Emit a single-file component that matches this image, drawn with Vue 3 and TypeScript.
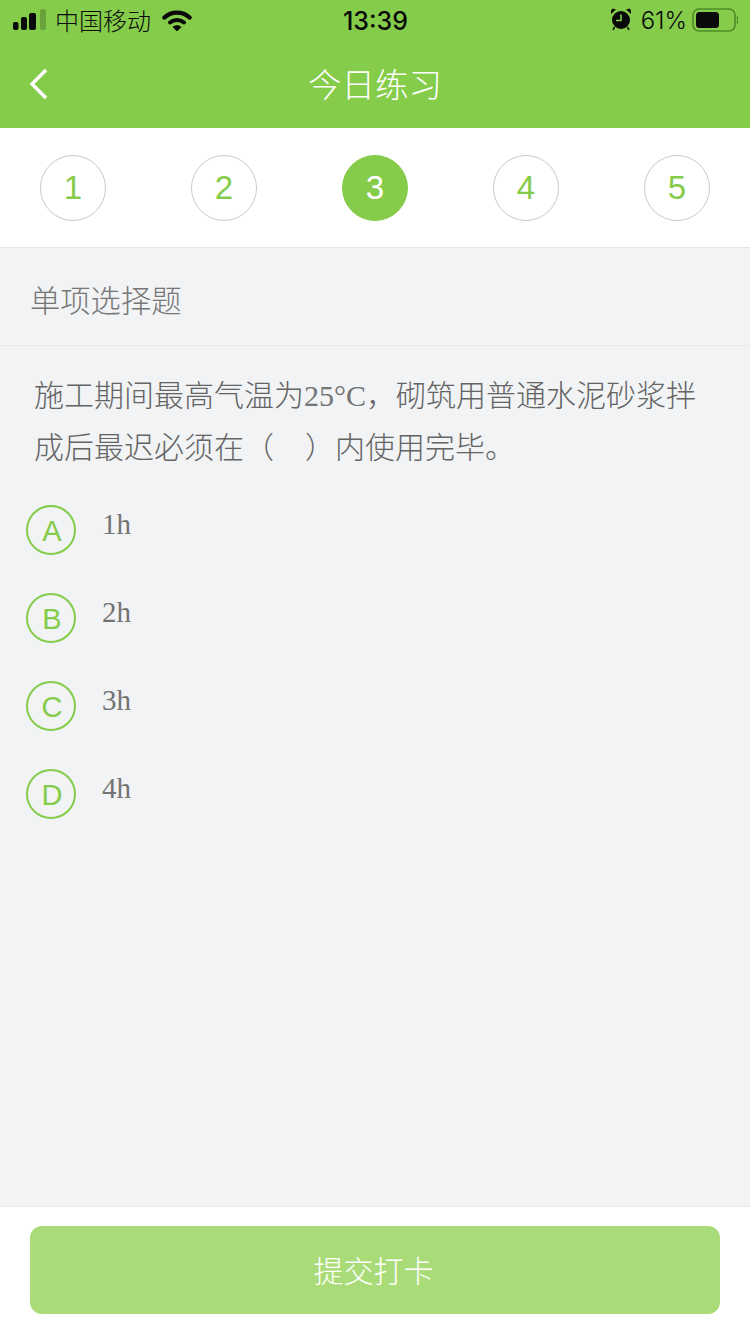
<template>
  <div class="page">
    <header class="top">
      <div class="status">
        <div class="status-left">
          <svg class="signal" width="34" height="24" viewBox="0 0 34 24">
            <rect x="0" y="13" width="5.5" height="8" rx="2" fill="#0a0a0a" />
            <rect x="8" y="8" width="6" height="13" rx="2" fill="#0a0a0a" />
            <rect x="16" y="4" width="7" height="17" rx="2" fill="#0a0a0a" />
            <rect x="27" y="0" width="6" height="21" rx="2" fill="#6aa33c" />
          </svg>
          <span class="carrier">中国移动</span>
          <svg class="wifi" width="30" height="22" viewBox="0 0 30 22">
            <path d="M2.5 8.5C9.5 2 20.5 2 27.5 8.5" fill="none" stroke="#0a0a0a" stroke-width="4.4" stroke-linecap="round" />
            <path d="M8 13.5C12 10 18 10 22 13.5" fill="none" stroke="#0a0a0a" stroke-width="4" stroke-linecap="round" />
            <path d="M10.5 18C13 15.8 17 15.8 19.5 18L15 22.5Z" fill="#0a0a0a" />
          </svg>
        </div>
        <span class="clock">13:39</span>
        <div class="status-right">
          <svg class="alarm" width="22" height="24" viewBox="0 0 22 24">
            <circle cx="11" cy="13" r="9" fill="#0a0a0a" />
            <path d="M11 7.5V13.5H6" stroke="#85cc4a" stroke-width="1.6" fill="none" />
            <path d="M1 7L6 2.5L2.5 1.5L1 3.5ZM21 7L16 2.5L19.5 1.5L21 3.5Z" fill="#0a0a0a" />
            <path d="M4.5 20L3 23M17.5 20L19 23" stroke="#0a0a0a" stroke-width="1.6" />
          </svg>
          <span class="percent">61%</span>
          <svg class="battery" width="46" height="24" viewBox="0 0 46 24">
            <rect x="1" y="1" width="42" height="22" rx="6" fill="none" stroke="#4f8a27" stroke-width="1.6" />
            <rect x="4" y="4" width="23" height="16" rx="3.5" fill="#0a0a0a" />
            <path d="M45 8.5C46 10 46 14 45 15.5" stroke="#4f8a27" stroke-width="1.4" fill="none" />
          </svg>
        </div>
      </div>
      <div class="nav">
        <svg class="back" width="20" height="32" viewBox="0 0 20 32">
          <path d="M17 2L3 16L17 30" fill="none" stroke="#fff" stroke-width="3.4" />
        </svg>
        <h1>今日练习</h1>
      </div>
    </header>

    <div class="steps">
      <div v-for="n in steps" :key="n" :class="['step', { active: n === current }]">{{ n }}</div>
    </div>

    <div class="type">单项选择题</div>

    <main class="body">
      <p class="question">施工期间最高气温为<span class="latin">25°C</span>，砌筑用普通水泥砂浆拌成后最迟必须在（<span class="blank"></span>）内使用完毕。</p>
      <div v-for="opt in options" :key="opt.key" class="option">
        <span class="badge">{{ opt.key }}</span>
        <span class="answer">{{ opt.text }}</span>
      </div>
    </main>

    <footer class="foot">
      <button class="submit"><span>提交打卡</span></button>
    </footer>
  </div>
</template>

<script setup lang="ts">
const steps = [1, 2, 3, 4, 5]
const current = 3

const options = [
  { key: 'A', text: '1h' },
  { key: 'B', text: '2h' },
  { key: 'C', text: '3h' },
  { key: 'D', text: '4h' },
]
</script>

<style>
body {
  background: #f1f3f5;
}
</style>

<style scoped>
.page {
  width: 750px;
  height: 1334px;
  display: flex;
  flex-direction: column;
  background: #f1f3f5;
  font-family: "Liberation Sans", "Noto Sans CJK SC", sans-serif;
}

.top {
  height: 128px;
  background: #85cc4a;
}

.status {
  height: 40px;
  padding: 0 12px 0 13px;
  display: grid;
  grid-template-columns: 1fr auto 1fr;
  align-items: center;
  color: #0a0a0a;
}

.status-left {
  display: flex;
  align-items: center;
}

.signal {
  margin-top: 1px;
}

.carrier {
  margin: -2px 0 0 8px;
  font-size: 24px;
  font-weight: 300;
}

.wifi {
  margin: -1px 0 0 11px;
}

.clock {
  margin-top: 1px;
  font-size: 25px;
  font-weight: 500;
  font-family: "Inter", "Liberation Sans", sans-serif;
}

.status-right {
  display: flex;
  align-items: center;
  justify-content: flex-end;
}

.alarm {
  margin-top: -2px;
}

.percent {
  margin: 1px 5px 0 9px;
  font-size: 24px;
  font-weight: 300;
  font-family: "Inter", "Liberation Sans", sans-serif;
}

.nav {
  position: relative;
  height: 88px;
  display: flex;
  align-items: center;
  justify-content: center;
}

.back {
  position: absolute;
  left: 29px;
  top: 28px;
}

.nav h1 {
  margin: 0 0 4px;
  color: #fff;
  font-size: 33.5px;
  font-weight: 300;
}

.steps {
  height: 119px;
  padding: 0 40px 0;
  display: flex;
  align-items: center;
  justify-content: space-between;
  background: #fff;
  border-bottom: 1px solid #e6e6e6;
}

.step {
  width: 66px;
  height: 66px;
  box-sizing: border-box;
  border: 1px solid #c9c9c9;
  border-radius: 50%;
  display: flex;
  align-items: center;
  justify-content: center;
  color: #85cc4a;
  font-size: 33px;
}

.step.active {
  background: #85cc4a;
  border-color: #85cc4a;
  color: #fff;
}

.type {
  height: 98px;
  box-sizing: border-box;
  padding: 4px 0 0 30px;
  display: flex;
  align-items: center;
  border-bottom: 1px solid #e6e8ea;
  color: #767676;
  font-size: 30.3px;
  font-weight: 300;
}

.body {
  flex: 1;
  padding: 24px 34px 0 26px;
}

.question {
  margin: 0 0 31px;
  padding-left: 8px;
  color: #646464;
  font-size: 30px;
  font-weight: 300;
  line-height: 52px;
}

.blank {
  display: inline-block;
  width: 31px;
}

.latin {
  font-family: "Liberation Serif", serif;
  font-weight: 400;
  color: #747474;
}

.option {
  height: 50px;
  margin-bottom: 38px;
  display: flex;
  align-items: flex-start;
}

.badge {
  width: 50px;
  height: 50px;
  box-sizing: border-box;
  padding: 3px 0 0 2px;
  border: 2px solid #85cc4a;
  border-radius: 50%;
  display: flex;
  align-items: center;
  justify-content: center;
  color: #85cc4a;
  font-size: 29px;
}

.answer {
  margin: -1px 0 0 26px;
  color: #747474;
  font-family: "Liberation Serif", serif;
  font-size: 29px;
  line-height: 40px;
}

.foot {
  height: 128px;
  box-sizing: border-box;
  padding: 19px 30px 0;
  background: #fff;
  border-top: 1px solid #e8e9eb;
}

.submit {
  width: 690px;
  height: 88px;
  border: 0;
  padding: 0 3px 3px 0;
  border-radius: 12px;
  background: #a9dc78;
  color: #fff;
  font-family: inherit;
  font-size: 30px;
  font-weight: 300;
}
</style>
